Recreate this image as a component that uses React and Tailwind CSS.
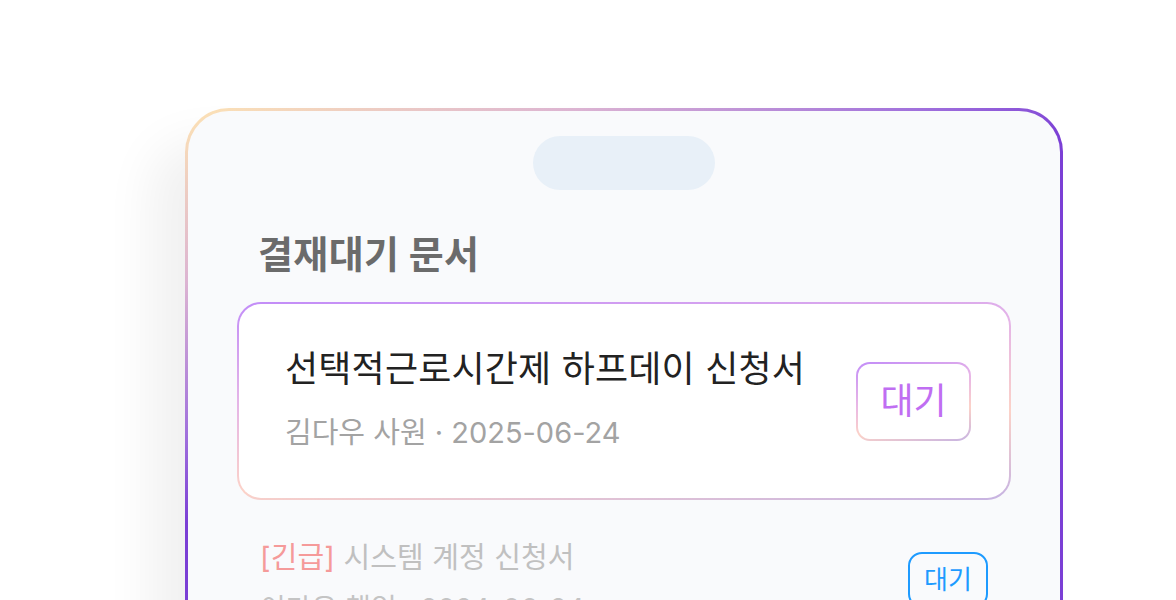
export default function App() {
  return (
    <div className="h-[600px] w-[1176px] overflow-hidden bg-white pl-[185px] pt-[108px] font-['Inter','Noto_Sans_CJK_KR',sans-serif]">
      <div className="w-[878px] rounded-[44px] bg-[linear-gradient(156deg,#fde3b4_0px,#dcb4d2_160px,#a070dc_300px,#7b3fd5_380px)] p-[3px] shadow-[-34px_34px_50px_rgba(0,0,0,0.06)]">
        <div className="h-[640px] rounded-[41px] bg-[#f9fafc] pt-[25px]">
          <div className="mx-auto h-[54px] w-[182px] rounded-full bg-[#e8f0f8]" />

          <h2 className="mt-[42px] pl-[70px] text-[38px] leading-[44px] font-bold tracking-[0.01em] text-[#6b6b6b]">
            결재대기 문서
          </h2>

          <div className="mx-[49px] mt-[26px] rounded-[24px] bg-[linear-gradient(174deg,#c28cf8_0%,#e4b4e8_35%,#fcd2c8_68%,#c6b3e2_100%)] p-[2px]">
            <div className="flex h-[194px] items-center justify-between rounded-[22px] bg-white pl-[46px] pr-[38px]">
              <div className="pb-[5px]">
                <p className="text-[36px] leading-[44px] tracking-[0.005em] text-[#222222]">
                  선택적근로시간제 하프데이 신청서
                </p>
                <p className="mt-[24px] text-[29px] leading-[36px] text-[#a3a3a3]">
                  김다우 사원 · 2025-06-24
                </p>
              </div>
              <div className="rounded-[14px] bg-[linear-gradient(166deg,#c28cf8_0%,#e8b6e6_40%,#fcd2c8_68%,#c6b3e2_100%)] p-[2px]">
                <div className="flex h-[75px] w-[111px] items-center justify-center rounded-[12px] bg-white text-[36px] text-[#c06ef2]">
                  대기
                </div>
              </div>
            </div>
          </div>

          <div className="mt-[40px] flex items-center justify-between pl-[72px] pr-[72px]">
            <div>
              <p className="text-[29px] leading-[36px] tracking-[0.005em] text-[#c0c0c0]">
                <span className="text-[#f59a9a]">[긴급]</span> 시스템 계정 신청서
              </p>
              <p className="mt-[15px] text-[28px] leading-[36px] text-[#c4c4c4]">
                이다은 책임 · 2024-06-24
              </p>
            </div>
            <div className="-mt-[8px] flex h-[56px] w-[80px] items-center justify-center rounded-[14px] border-2 border-[#1e9bff] text-[26px] text-[#1e9bff]">
              대기
            </div>
          </div>
        </div>
      </div>
    </div>
  );
}
